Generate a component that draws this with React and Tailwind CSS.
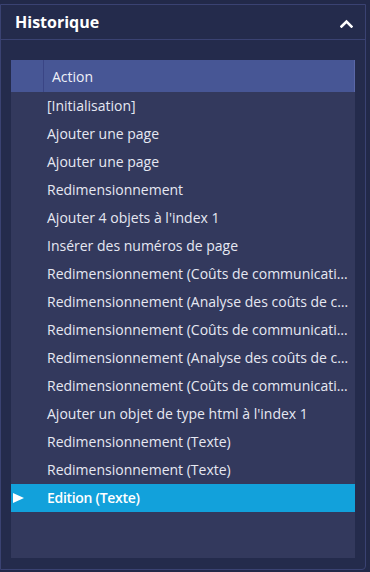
import React from "react";

const rows = [
  "[Initialisation]",
  "Ajouter une page",
  "Ajouter une page",
  "Redimensionnement",
  "Ajouter 4 objets à l'index 1",
  "Insérer des numéros de page",
  "Redimensionnement (Coûts de communication)",
  "Redimensionnement (Analyse des coûts de communication)",
  "Redimensionnement (Coûts de communication)",
  "Redimensionnement (Analyse des coûts de communication)",
  "Redimensionnement (Coûts de communication)",
  "Ajouter un objet de type html à l'index 1",
  "Redimensionnement (Texte)",
  "Redimensionnement (Texte)",
  "Edition (Texte)",
];

export default function App() {
  return (
    <div
      className="w-[370px] h-[572px] bg-[#222949] pt-[4px] overflow-hidden"
      style={{ fontFamily: '"Open Sans", "Noto Sans", sans-serif' }}
    >
      <div className="w-[366px] h-[566px] border border-[#3a4272] rounded-br-[4px] bg-[#242b4c] flex flex-col">
        <div className="h-[35px] border-b border-[#3a4272] flex items-center justify-between pl-[14px] pr-[12px] shrink-0">
          <span className="text-[16px] font-bold text-white leading-[20px]">Historique</span>
          <svg width="13" height="9" viewBox="0 0 13 9" className="mt-[2px]">
            <path d="M1.5 7.5 L6.5 2.5 L11.5 7.5" fill="none" stroke="#ffffff" strokeWidth="2.6" strokeLinecap="square" />
          </svg>
        </div>
        <div className="pt-[20px] pl-[10px]">
          <div className="w-[344px] h-[498px] bg-[#33395d] flex flex-col">
            <div className="h-[32px] bg-[#475695] flex shrink-0 border-r border-[#5a67a8]">
              <div className="w-[33px] border-r border-[#3a4585]" />
              <div className="flex-1 flex items-center pl-[8px] pt-[2px] text-[14px] leading-[20px] text-[#eef0f8]">Action</div>
            </div>
            {rows.map((r, i) => {
              const sel = i === rows.length - 1;
              return (
                <div
                  key={i}
                  className={
                    "h-[28px] flex items-center shrink-0 " +
                    (sel ? "bg-[#12a1db] text-white font-semibold tracking-[-0.3px]" : "text-[#e6e8f2]")
                  }
                >
                  <div className="w-[34px] flex items-center pl-[2px]">
                    {sel && (
                      <svg width="11" height="10" viewBox="0 0 11 10">
                        <polygon points="0,0 11,5 0,10" fill="#ffffff" />
                      </svg>
                    )}
                  </div>
                  <div className="flex-1 min-w-0 pl-[2px] pr-[5px] truncate text-[14px] leading-[20px]">{r}</div>
                </div>
              );
            })}
          </div>
        </div>
      </div>
    </div>
  );
}
